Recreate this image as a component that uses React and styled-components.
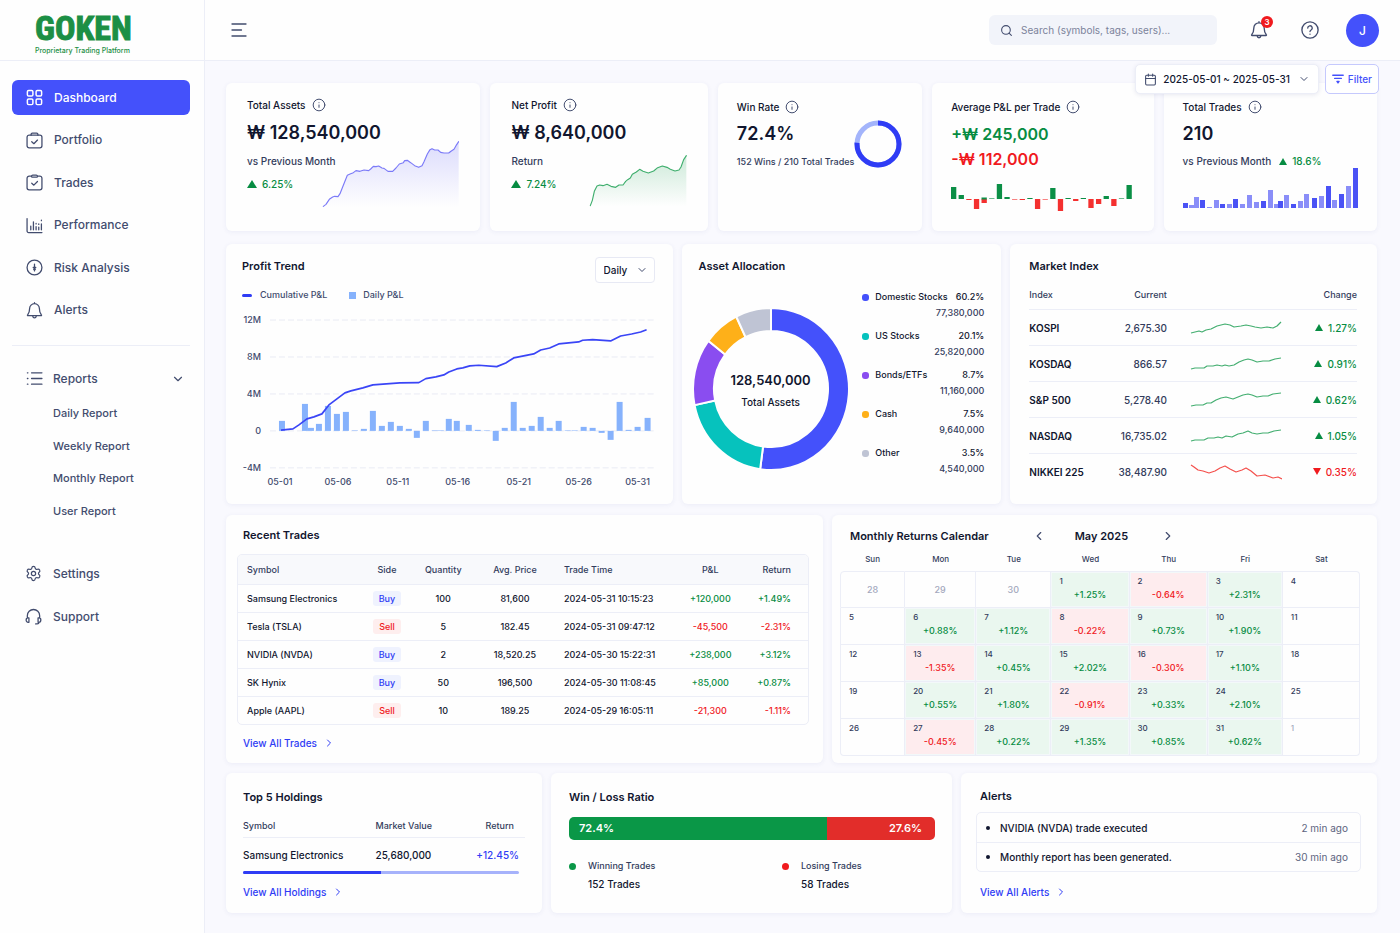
import React, { useState } from 'react';
import styled, { createGlobalStyle } from 'styled-components';
import {
  Calendar,
  ChevronDown,
  ChevronLeft,
  ChevronRight,
  Info,
  Search,
  Settings,
} from 'lucide-react';

const GlobalStyle = createGlobalStyle`
  :root {
    --clr-primary: #4451fb;
    --clr-primary-deep: #2f3cf5;
    --clr-text: #11162f;
    --clr-soft: #333c5c;
    --clr-nav: #424c6e;
    --clr-muted: #a3a8bd;
    --clr-green: #078c42;
    --clr-red: #f01a1e;
    --clr-line: #eceef7;
    --clr-page: #f9f9fe;
    --ff-primary: Inter, 'Liberation Sans', sans-serif;
  }
  * {
    box-sizing: border-box;
  }
  body {
    margin: 0;
    background: var(--clr-page);
    color: var(--clr-text);
    font-family: var(--ff-primary);
    font-size: 10px;
    line-height: 16px;
  }
  h1, h2, p, ul, dl, dd {
    margin: 0;
    padding: 0;
  }
  ul {
    list-style: none;
  }
  button, input, select {
    font-family: inherit;
    font-size: inherit;
    color: inherit;
  }
  button {
    padding: 0;
    border: none;
    background: none;
    cursor: pointer;
  }
  a {
    color: inherit;
    text-decoration: none;
  }
  table {
    width: 100%;
    border-collapse: separate;
    border-spacing: 0;
    table-layout: fixed;
  }
  th, td {
    padding: 0;
    font-weight: 500;
    text-align: left;
  }
  svg {
    display: block;
    flex: none;
  }
`;

/* ---------- layout ---------- */

const Layout = styled.div`
  display: grid;
  grid-template-columns: 205px minmax(0, 1fr);
  min-height: 100vh;
`;

const Sidebar = styled.aside`
  background: #fefefe;
  border-right: 1px solid var(--clr-line);
`;

const Brand = styled.a`
  display: flex;
  flex-direction: column;
  align-items: flex-start;
  height: 61px;
  padding: 12px 0 0 35px;
  border-bottom: 1px solid var(--clr-line);
  color: #1c8f45;
  strong {
    font-family: 'Roboto Condensed', Roboto, sans-serif;
    font-size: 34px;
    line-height: 32px;
    font-weight: 700;
    -webkit-text-stroke: 1px currentColor;
  }
  span {
    margin-top: 2px;
    font-size: 7px;
    line-height: 9px;
    font-weight: 500;
  }
`;

const NavList = styled.ul`
  display: flex;
  flex-direction: column;
  justify-content: space-between;
  height: ${(p) => p.$height}px;
  margin: ${(p) => p.$margin};
`;

const NavLink = styled.a`
  display: flex;
  align-items: center;
  gap: 11px;
  height: 35px;
  padding: 0 14px;
  border-radius: 6px;
  font-size: 12px;
  font-weight: 500;
  color: ${(p) => (p.$active ? '#fff' : 'var(--clr-nav)')};
  background: ${(p) => (p.$active ? 'var(--clr-primary)' : 'transparent')};
`;

const NavToggle = styled.button`
  display: flex;
  align-items: center;
  gap: 10px;
  width: calc(100% - 26px);
  height: 35px;
  margin: 15px 12px 0;
  padding: 0 5px 0 14px;
  font-size: 12px;
  font-weight: 500;
  color: var(--clr-nav);
  svg:last-child {
    margin-left: auto;
  }
`;

const SubLink = styled.a`
  display: block;
  padding-left: 53px;
  font-size: 11px;
  font-weight: 500;
  color: var(--clr-nav);
`;

const NavDivider = styled.hr`
  height: 1px;
  margin: 17px 14px 0 12px;
  border: none;
  background: var(--clr-line);
`;

const Header = styled.header`
  display: flex;
  align-items: center;
  height: 61px;
  padding: 0 21px 0 26px;
  background: #fefefe;
  border-bottom: 1px solid var(--clr-line);
  color: var(--clr-nav);
`;

const SearchBox = styled.label`
  display: flex;
  align-items: center;
  gap: 8px;
  width: 228px;
  height: 30px;
  margin: 0 32px 0 auto;
  padding: 0 11px;
  border-radius: 6px;
  background: #f2f4fa;
  input {
    flex: 1;
    min-width: 0;
    padding: 0;
    border: none;
    outline: none;
    background: none;
    &::placeholder {
      color: #7c839b;
      opacity: 1;
    }
  }
`;

const IconButton = styled.button`
  position: relative;
  display: grid;
  place-items: center;
  width: 20px;
  height: 20px;
  margin-right: 31px;
  color: var(--clr-nav);
  & + & {
    margin-right: 26px;
  }
`;

const Badge = styled.span`
  position: absolute;
  top: -4px;
  right: -4px;
  width: 12px;
  height: 12px;
  border-radius: 50%;
  background: var(--clr-red);
  color: #fff;
  font-size: 8px;
  line-height: 12px;
  font-weight: 600;
  text-align: center;
`;

const Avatar = styled.button`
  width: 33px;
  height: 33px;
  border-radius: 50%;
  background: var(--clr-primary);
  color: #fff;
  font-size: 12px;
  font-weight: 500;
`;

const Content = styled.main`
  position: relative;
  padding: 22px 23px 20px 21px;
`;

const Toolbar = styled.div`
  position: absolute;
  top: 3px;
  right: 21px;
  display: flex;
  gap: 6px;
`;

const ToolButton = styled.button`
  display: flex;
  align-items: center;
  gap: ${(p) => (p.$accent ? 4 : 6)}px;
  height: 30px;
  padding: 0 ${(p) => (p.$accent ? 6 : 8)}px;
  border: 1px solid ${(p) => (p.$accent ? '#c5c9fd' : 'var(--clr-line)')};
  border-radius: 5px;
  background: #fff;
  color: ${(p) => (p.$accent ? 'var(--clr-primary)' : 'var(--clr-text)')};
  font-weight: 500;
  box-shadow: ${(p) => (p.$accent ? 'none' : '0 1px 4px rgba(40, 50, 120, 0.1)')};
  svg {
    color: ${(p) => (p.$accent ? 'inherit' : 'var(--clr-nav)')};
  }
  svg + svg {
    margin-left: 2px;
  }
`;

const Row = styled.section`
  display: grid;
  grid-template-columns: ${(p) => p.$cols};
  gap: ${(p) => p.$gap || 9}px;
  margin-bottom: ${(p) => p.$after || 0}px;
`;

const Card = styled.article`
  min-width: 0;
  min-height: ${(p) => p.$minHeight}px;
  padding: ${(p) => p.$pad};
  border-radius: 6px;
  background: #fefefe;
  box-shadow: 0 1px 5px rgba(60, 70, 150, 0.07);
`;

const CardTitle = styled.h2`
  font-size: 11px;
  line-height: 16px;
  font-weight: 600;
  margin: ${(p) => p.$margin || '0'};
`;

const MoreLink = styled.a`
  display: inline-flex;
  align-items: center;
  gap: 6px;
  margin: ${(p) => p.$margin};
  color: var(--clr-primary-deep);
  font-weight: 500;
`;

/* ---------- kpi ---------- */

const KpiCard = styled(Card)`
  display: grid;
  /* text and drawing share one cell, the drawing may run under the text */
  > * {
    grid-area: 1 / 1;
  }
`;

const KpiLabel = styled.h2`
  display: flex;
  align-items: center;
  gap: 6px;
  margin-bottom: ${(p) => (p.$low ? 8 : 9)}px;
  font-size: 10px;
  line-height: 16px;
  font-weight: 500;
  svg {
    color: var(--clr-nav);
  }
`;

const KpiValue = styled.p`
  font-size: ${(p) => p.$size || 18}px;
  line-height: 22px;
  font-weight: 600;
  margin-bottom: ${(p) => p.$after || 9}px;
  color: ${(p) => p.$color || 'inherit'};
`;

const KpiNote = styled.p`
  display: flex;
  gap: 8px;
  margin-bottom: 7px;
  font-size: ${(p) => p.$size || 10}px;
  font-weight: 500;
  color: var(--clr-soft);
`;

const Delta = styled.span`
  display: inline-flex;
  align-items: center;
  gap: 5px;
  font-weight: 500;
  color: ${(p) => (p.$down ? 'var(--clr-red)' : 'var(--clr-green)')};
  &::before {
    content: '';
    border: solid transparent;
    border-width: ${(p) => {
      const side = p.$big ? 5 : 4;
      const tall = p.$big ? 8 : 7;
      return p.$down ? `${tall}px ${side}px 0` : `0 ${side}px ${tall}px`;
    }};
    border-${(p) => (p.$down ? 'top' : 'bottom')}-color: currentColor;
  }
`;

const KpiChart = styled.svg`
  justify-self: ${(p) => p.$justify || 'end'};
  align-self: ${(p) => p.$align || 'end'};
`;

/* ---------- profit trend ---------- */

const CardHead = styled.div`
  display: flex;
  justify-content: space-between;
`;

const SelectBox = styled.div`
  position: relative;
  width: 60px;
  height: 26px;
  color: var(--clr-nav);
  select {
    width: 100%;
    height: 100%;
    padding: 0 8px;
    border: 1px solid #e7e9f4;
    border-radius: 4px;
    background: #fff;
    appearance: none;
    color: var(--clr-text);
    font-weight: 500;
  }
  svg {
    position: absolute;
    top: 7px;
    right: 7px;
    pointer-events: none;
  }
`;

const ChartLegend = styled.ul`
  display: flex;
  gap: 22px;
  margin: 4px 0 5px;
  color: var(--clr-nav);
  font-size: 9px;
  font-weight: 500;
  li {
    display: flex;
    align-items: center;
  }
`;

const LegendKey = styled.i`
  width: ${(p) => (p.$line ? 10 : 7)}px;
  height: ${(p) => (p.$line ? 3 : 7)}px;
  margin-right: ${(p) => (p.$line ? 8 : 7)}px;
  border-radius: ${(p) => (p.$line ? 2 : 0)}px;
  background: ${(p) => (p.$line ? 'var(--clr-primary-deep)' : '#86b2fc')};
`;

const TrendSvg = styled.svg`
  width: 100%;
  height: auto;
  text {
    font-size: 9px;
    font-weight: 500;
    fill: var(--clr-nav);
  }
`;

/* ---------- allocation ---------- */

const Allocation = styled.div`
  display: flex;
  justify-content: space-between;
  margin-top: 15px;
`;

const Donut = styled.div`
  display: grid;
  place-items: center;
  margin: 4px 0 0 -6px;
  > * {
    grid-area: 1 / 1;
  }
  p {
    padding-top: 4px;
    text-align: center;
    font-weight: 500;
  }
  strong {
    display: block;
    margin-bottom: 6px;
    font-size: 13px;
    font-weight: 600;
  }
`;

const AllocationList = styled.dl`
  width: 122px;
  font-size: 9px;
  font-weight: 500;
  div {
    display: grid;
    grid-template-columns: 13px auto 1fr;
    align-items: center;
    height: 39px;
    align-content: start;
  }
  dt {
    display: contents;
  }
  dd {
    text-align: right;
  }
  dd:last-child {
    grid-column: 1 / -1;
    color: var(--clr-soft);
  }
`;

const Dot = styled.i`
  width: ${(p) => p.$size || 7}px;
  height: ${(p) => p.$size || 7}px;
  border-radius: ${(p) => (p.$round ? '50%' : '3px')};
  background: ${(p) => p.$color};
`;

/* ---------- tables ---------- */

const MarketTable = styled.table`
  margin-top: 11px;
  thead th {
    height: 24px;
    padding-bottom: 4px;
    color: var(--clr-soft);
    font-size: 9px;
  }
  td, tbody th {
    height: 36px;
    border-top: 1px solid var(--clr-line);
    color: var(--clr-soft);
  }
  tbody th {
    color: var(--clr-text);
    font-weight: 600;
  }
  th:nth-child(2), td:nth-child(2),
  th:last-child, td:last-child {
    text-align: right;
  }
  svg {
    margin-left: 23px;
  }
`;

const TradesTable = styled.table`
  border: 1px solid var(--clr-line);
  border-radius: 5px;
  overflow: hidden;
  font-size: 9px;
  thead th {
    height: 29px;
    background: #f8f9fc;
    color: var(--clr-soft);
  }
  td, tbody th {
    height: 28px;
    border-top: 1px solid var(--clr-line);
  }
  th, td {
    text-align: center;
  }
  th:first-child {
    padding-left: 9px;
    text-align: left;
  }
  th:nth-child(5), td:nth-child(5) {
    padding-left: 12px;
    text-align: left;
  }
  th:last-child, td:last-child {
    padding-right: 17px;
    text-align: right;
  }
`;

const Side = styled.span`
  display: inline-block;
  width: 28px;
  height: 15px;
  line-height: 15px;
  border-radius: 3px;
  color: ${(p) => (p.$sell ? 'var(--clr-red)' : 'var(--clr-primary-deep)')};
  background: ${(p) => (p.$sell ? '#feeeee' : '#eff2fe')};
`;

const Signed = styled.span`
  color: ${(p) => (p.children[0] === '-' ? 'var(--clr-red)' : 'var(--clr-green)')};
`;

/* ---------- calendar ---------- */

const CalendarHead = styled.div`
  display: flex;
  align-items: center;
  padding-left: 10px;
  button {
    color: var(--clr-nav);
  }
  h2:last-of-type {
    margin: 0 33px 0 29px;
  }
  button:first-of-type {
    margin-left: 43px;
  }
`;

const CalendarTable = styled.table`
  margin-top: 5px;
  thead th {
    height: 22px;
    padding-bottom: 2px;
    font-size: 8px;
    text-align: center;
    color: var(--clr-soft);
  }
  tbody tr:first-child td {
    border-top: 1px solid var(--clr-line);
  }
  tbody td:first-child {
    border-left: 1px solid var(--clr-line);
  }
  tbody tr:first-child td:first-child {
    border-top-left-radius: 4px;
  }
  tbody tr:first-child td:last-child {
    border-top-right-radius: 4px;
  }
  tbody tr:last-child td:first-child {
    border-bottom-left-radius: 4px;
  }
  tbody tr:last-child td:last-child {
    border-bottom-right-radius: 4px;
  }
`;

const dayFill = { up: '#eaf7ef', down: '#feecee', none: 'transparent' };

const Day = styled.td`
  height: 37px;
  padding: ${(p) => (p.$centered ? '0' : '3px 8px 0')};
  border-right: 1px solid var(--clr-line);
  border-bottom: 1px solid var(--clr-line);
  background: ${(p) => dayFill[p.$tone]};
  box-shadow: inset 0 0 0 1px ${(p) => (p.$tone === 'none' ? 'transparent' : '#f3f8f9')};
  vertical-align: ${(p) => (p.$centered ? 'middle' : 'top')};
  text-align: ${(p) => (p.$centered ? 'center' : 'left')};
  color: ${(p) => (p.$muted ? 'var(--clr-muted)' : 'var(--clr-soft)')};
  font-size: ${(p) => (p.$centered ? 9 : 8)}px;
  line-height: 12px;
  span {
    display: block;
    margin-top: 2px;
    font-size: 9px;
    text-align: center;
  }
`;

/* ---------- bottom row ---------- */

const HoldingsTable = styled.table`
  thead th {
    height: 24px;
    border-bottom: 1px solid var(--clr-line);
    font-size: 9px;
    color: var(--clr-soft);
  }
  td, tbody th {
    height: 33px;
  }
  thead th:first-child {
    width: 47%;
  }
  thead th:last-child {
    padding-right: 11px;
    text-align: right;
  }
  td:last-child {
    padding-right: 6px;
    text-align: right;
    color: var(--clr-primary-deep);
  }
`;

const Track = styled.div`
  height: 3px;
  margin-right: 6px;
  border-radius: 2px;
  background: #a6b2fb;
  overflow: hidden;
  div {
    height: 100%;
    background: var(--clr-primary-deep);
  }
`;

const RatioBar = styled.div`
  display: flex;
  height: 23px;
  margin-top: 12px;
  border-radius: 5px;
  overflow: hidden;
  color: #fff;
  font-size: 11px;
  line-height: 22px;
  font-weight: 600;
  div {
    flex: 1;
    padding: 0 13px 0 10px;
    background: #e22d2a;
    text-align: right;
  }
  div:first-child {
    flex: none;
    background: #0a9747;
    text-align: left;
  }
`;

const RatioLegend = styled.ul`
  display: grid;
  grid-template-columns: 213px 1fr;
  margin-top: 18px;
  li {
    display: grid;
    grid-template-columns: 19px 1fr;
    align-items: center;
    row-gap: 2px;
    font-weight: 500;
  }
  span {
    font-size: 9px;
    color: var(--clr-soft);
  }
  b {
    grid-column: 2;
    font-weight: 500;
  }
`;

const AlertList = styled.ul`
  border: 1px solid var(--clr-line);
  border-radius: 5px;
  font-weight: 500;
  li {
    display: flex;
    align-items: center;
    height: 29px;
    padding: 0 12px 0 9px;
  }
  li + li {
    border-top: 1px solid var(--clr-line);
  }
  i {
    margin-right: 10px;
  }
  time {
    margin-left: auto;
    color: #5d6580;
    font-weight: 400;
  }
`;

/* ---------- data ---------- */

const assetsLine =
  '310,408 318,402 328,387 338,380 344,378 354,379 360,370 370,345 382,315 392,310 400,307 408,301 420,303 432,299 446,301 452,296 460,288 468,289 476,287 486,293 492,294 504,303 518,303 528,293 538,281 550,277 554,271 562,270 572,277 584,286 596,291 606,286 612,274 622,251 630,238 636,235 644,239 654,239 662,246 672,248 686,248 694,242 702,237 708,226 716,214';

const profitLine =
  '1110,408 1116,392 1122,365 1130,349 1138,346 1148,348 1160,344 1172,350 1186,353 1196,346 1208,346 1216,335 1222,330 1230,325 1236,314 1248,307 1258,299 1268,305 1284,310 1300,304 1312,294 1326,289 1340,293 1350,299 1364,304 1376,301 1382,292 1390,270 1398,258';

const avgBars = [
  12, 4, -1, -10, -4, 0.6, 15, 2, -0.6, -1, 1, -10, -0.6, 11, -12, 1, -2, 1, -9,
  -5, 3, -7, 0.6, 14,
];

// x centre, height, strong fill
const tradeBars = [
  [2, 5, 1], [8, 3], [13, 11], [19, 8, 1], [26, 1], [33, 8], [39, 4, 1], [46, 4],
  [52, 9, 1], [59, 4], [66, 13], [73, 6], [80, 7, 1], [87, 18], [93, 4], [97, 7, 1],
  [103, 13], [110, 4, 1], [117, 7], [123, 14], [131, 10, 1], [138, 12], [145, 22, 1],
  [151, 8], [158, 14, 1], [165, 22], [172, 40, 1],
];

const trendBars = [
  [40, 10], [63, 27], [69, 3], [77, 7], [86, 25], [95, 17], [104, 19], [113, 0.5],
  [122, 2], [131, 20], [140, 5], [149, 9], [158, 5], [167, 2], [175, -7], [184, 10],
  [193, 0.5], [199, 0.5], [207, 12], [215, 10], [227, 6], [236, 1], [245, 0.5],
  [254, -10], [263, 3], [272, 29], [281, 3], [290, 5], [299, 14], [308, 3], [317, 10],
  [326, 0.5], [333, 0.5], [342, 4], [351, 3], [360, -2], [369, -9], [378, 29],
  [387, 1], [396, 4], [406, 13],
];

const trendLine =
  '39,122.3 51,121 57,117 65,111 72,109 80,106 87,97 95,91 103,85 109,83 121,80 131,77 158,75 177,74.7 184,70.7 194,69 202,67 207,64 215,61 221,60 228,58 237,57.3 255,58.7 264,55 272,50 292,46 299,42 308,40 317,36 337,34 341,32.3 351,31.7 369,33 379,28 390,26 399,24 405,21.7';

const trendTicks = [
  ['12M', 12],
  ['8M', 49],
  ['4M', 86],
  ['0', 123],
  ['-4M', 160],
];

const trendDates = [
  ['05-01', 38],
  ['05-06', 96],
  ['05-11', 156],
  ['05-16', 216],
  ['05-21', 277],
  ['05-26', 337],
  ['05-31', 396],
];

// from / to are degrees clockwise from the top
const allocation = [
  { name: 'Domestic Stocks', share: '60.2%', value: '77,380,000', color: '#4451fb', from: 0, to: 188 },
  { name: 'US Stocks', share: '20.1%', value: '25,820,000', color: '#06c2bd', from: 188, to: 258.5 },
  { name: 'Bonds/ETFs', share: '8.7%', value: '11,160,000', color: '#8a4df0', from: 258.5, to: 306.5 },
  { name: 'Cash', share: '7.5%', value: '9,640,000', color: '#feb019', from: 306.5, to: 333.5 },
  { name: 'Other', share: '3.5%', value: '4,540,000', color: '#bfc4d4', from: 333.5, to: 360 },
];

const markets = [
  { name: 'KOSPI', current: '2,675.30', change: '1.27%', line: '0,12 4,11 8,10 11,11 15,9 20,8 26,5 30,4 34,3 39,4 43,6 50,5 55,4 60,5 64,6 70,7 76,6 82,7 86,5 90,1' },
  { name: 'KOSDAQ', current: '866.57', change: '0.91%', line: '0,12 4,11 9,11 13,11 16,9 22,9 26,8 31,9 34,8 38,9 43,8 48,5 53,3 57,2 61,3 66,5 72,4 78,4 84,2 90,1' },
  { name: 'S&P 500', current: '5,278.40', change: '0.62%', line: '0,13 5,12 12,12 16,10 20,10 25,7 30,5 35,4 42,6 47,4 52,2 57,1 61,2 66,4 72,3 77,3 82,1 90,0' },
  { name: 'NASDAQ', current: '16,735.02', change: '1.05%', line: '0,12 4,11 13,11 17,9 23,9 27,8 31,9 35,7 41,8 47,5 52,4 57,2 61,4 66,5 72,4 77,4 83,2 90,1' },
  { name: 'NIKKEI 225', current: '38,487.90', change: '0.35%', down: true, line: '0,0 3,2 7,5 12,6 18,8 24,6 29,3 34,1 39,4 45,7 51,5 55,3 60,6 66,11 74,10 82,13 87,12 91,14' },
];

const trades = [
  ['Samsung Electronics', 'Buy', '100', '81,600', '2024-05-31 10:15:23', '+120,000', '+1.49%'],
  ['Tesla (TSLA)', 'Sell', '5', '182.45', '2024-05-31 09:47:12', '-45,500', '-2.31%'],
  ['NVIDIA (NVDA)', 'Buy', '2', '18,520.25', '2024-05-30 15:22:31', '+238,000', '+3.12%'],
  ['SK Hynix', 'Buy', '50', '196,500', '2024-05-30 11:08:45', '+85,000', '+0.87%'],
  ['Apple (AAPL)', 'Sell', '10', '189.25', '2024-05-29 16:05:11', '-21,300', '-1.11%'],
];

const weekDays = ['Sun', 'Mon', 'Tue', 'Wed', 'Thu', 'Fri', 'Sat'];

const weeks = [
  [[28, 'prev'], [29, 'prev'], [30, 'prev'], [1, '+1.25%'], [2, '-0.64%'], [3, '+2.31%'], [4]],
  [[5], [6, '+0.88%'], [7, '+1.12%'], [8, '-0.22%'], [9, '+0.73%'], [10, '+1.90%'], [11]],
  [[12], [13, '-1.35%'], [14, '+0.45%'], [15, '+2.02%'], [16, '-0.30%'], [17, '+1.10%'], [18]],
  [[19], [20, '+0.55%'], [21, '+1.80%'], [22, '-0.91%'], [23, '+0.33%'], [24, '+2.10%'], [25]],
  [[26], [27, '-0.45%'], [28, '+0.22%'], [29, '+1.35%'], [30, '+0.85%'], [31, '+0.62%'], [1, 'next']],
];

/* ---------- icons ---------- */

const Glyph = ({ size = 17, width = 1.2, children }) => (
  <svg
    width={size}
    height={size}
    viewBox="0 0 16 16"
    fill="none"
    stroke="currentColor"
    strokeWidth={width}
    strokeLinecap="round"
    strokeLinejoin="round"
    aria-hidden="true"
  >
    {children}
  </svg>
);

const DashboardIcon = () => (
  <Glyph width={1.4}>
    <rect x="1.3" y="1.3" width="5.2" height="5.2" rx="1.2" />
    <rect x="9.5" y="1.3" width="5.2" height="5.2" rx="1.2" />
    <rect x="1.3" y="9.5" width="5.2" height="5.2" rx="1.2" />
    <rect x="9.5" y="9.5" width="5.2" height="5.2" rx="1.2" />
  </Glyph>
);

const BellIcon = ({ size }) => (
  <Glyph size={size}>
    <path d="M8 .6v.9M3.4 6.2a4.6 4.6 0 0 1 9.2 0c0 3 .4 4.3 1.9 6a.4.4 0 0 1-.3.7H1.800a.4.4 0 0 1-.3-.7c1.500-1.700 1.900-3 1.900-6ZM6.300 13.200c.2 1 .8 1.700 1.700 1.700s1.500-.7 1.700-1.700" />
  </Glyph>
);

const PortfolioIcon = () => (
  <Glyph>
    <rect x="1" y="3" width="14" height="12" rx="2" />
    <path d="M4.800 3v-.8A1.200 1.200 0 0 1 6 1h4a1.200 1.200 0 0 1 1.200 1.200V3M5.400 9.200l2 1.800 3.400-3.400" />
  </Glyph>
);

const TradesIcon = () => (
  <Glyph>
    <path d="M5 2H3a2 2 0 0 0-2 2v9a2 2 0 0 0 2 2h10a2 2 0 0 0 2-2V4a2 2 0 0 0-2-2h-2M5 2c.2-.7.7-1 1.400-1h3.200c.7 0 1.200.3 1.400 1L10.400 3H5.600ZM5.400 8.700l2 1.800 3.400-3.400" />
  </Glyph>
);

const PerformanceIcon = () => (
  <Glyph>
    <path d="M1 1.500v11.700a1.500 1.500 0 0 0 1.500 1.500H15M4.500 8.500v3.500M7 4.500V12M9.500 6v.5M9.500 9v3M12 6.500v.5M12 9.500V12M14.500 3v.5M14.500 6.500V12" />
  </Glyph>
);

const RiskIcon = () => (
  <Glyph>
    <circle cx="8" cy="8" r="7" />
    <path d="M8 4.800v6.400M6.800 8h2.400M7.200 9.600l.8 1 .8-1" />
  </Glyph>
);

const ListIcon = () => (
  <Glyph>
    <path d="M5.200 2.700H15M5.200 8H15M5.200 13.300H15M1.300 2.700h.5M1.300 8h.5M1.300 13.300h.5" />
  </Glyph>
);

const SupportIcon = () => (
  <Glyph>
    <path d="M2.200 9.500V7.200a5.800 5.800 0 0 1 11.600 0v2.300M2.500 9.300h1.200v4.200H3a1.900 1.900 0 0 1-1.900-2.100c0-1.200.6-2.100 1.400-2.100ZM13.500 9.300h-1.200v4.200H13c1 0 1.900-.8 1.900-2.100 0-1.200-.6-2.100-1.400-2.100ZM13.200 13.500c0 1-.8 1.500-1.800 1.500H10" />
  </Glyph>
);

const MenuIcon = () => (
  <Glyph size={16} width={1.3}>
    <path d="M1 2h14M1 8h9.500M1 14h14" />
  </Glyph>
);

const HelpIcon = () => (
  <Glyph size={18}>
    <circle cx="8" cy="8" r="7.200" />
    <path d="M6 6.300a2 2 0 1 1 3 1.700c-.7.4-1 .7-1 1.400M8 11.600v.1" />
  </Glyph>
);

const FilterIcon = () => (
  <Glyph size={12} width={1.7}>
    <path d="M1 3h14M3.500 7.300h9M6.500 11.300h3L8 13.300Z" />
  </Glyph>
);

/* ---------- parts ---------- */

const Kpi = ({ label, low, chart, children }) => (
  <KpiCard $minHeight={148} $pad={low ? '16px 19px 18px' : '14px 21px 24px'}>
    {chart}
    <div>
      <KpiLabel $low={low}>
        {label}
        <Info size={14} strokeWidth={1.7} />
      </KpiLabel>
      {children}
    </div>
  </KpiCard>
);

const AreaChart = ({ id, line, box, width, height, color, base }) => {
  const pts = line.split(' ');
  const first = pts[0].split(',')[0];
  const last = pts[pts.length - 1].split(',')[0];
  return (
    <KpiChart width={width} height={height} viewBox={box} aria-hidden="true">
      <defs>
        <linearGradient id={id} x1="0" y1="0" x2="0" y2="1">
          <stop offset="0" stopColor={color} stopOpacity="0.26" />
          <stop offset="1" stopColor={color} stopOpacity="0" />
        </linearGradient>
      </defs>
      <polygon points={`${first},${base} ${line} ${last},${base}`} fill={`url(#${id})`} />
      <polyline
        points={line}
        fill="none"
        stroke={color}
        strokeWidth="3.4"
        strokeLinejoin="round"
        strokeLinecap="round"
      />
    </KpiChart>
  );
};

const segmentPath = ({ from, to }) => {
  const at = (deg, rx, ry) => {
    const a = (deg * Math.PI) / 180;
    return `${78 + rx * Math.sin(a)} ${81 - ry * Math.cos(a)}`;
  };
  const large = to - from > 180 ? 1 : 0;
  return `M${at(from, 78, 81)}A78 81 0 ${large} 1 ${at(to, 78, 81)}L${at(to, 57, 58)}A57 58 0 ${large} 0 ${at(from, 57, 58)}Z`;
};

const DayCell = ({ day, value }) => {
  const outside = value === 'prev' || value === 'next';
  const hasValue = value && !outside;
  const tone = !hasValue ? 'none' : value[0] === '-' ? 'down' : 'up';
  return (
    <Day $tone={tone} $muted={outside} $centered={value === 'prev'}>
      {day}
      {hasValue && <Signed>{value}</Signed>}
    </Day>
  );
};

const navItems = [
  ['Dashboard', <DashboardIcon />],
  ['Portfolio', <PortfolioIcon />],
  ['Trades', <TradesIcon />],
  ['Performance', <PerformanceIcon />],
  ['Risk Analysis', <RiskIcon />],
  ['Alerts', <BellIcon />],
];

const SideNav = () => {
  const [open, setOpen] = useState(true);
  return (
    <Sidebar>
      <Brand href="#">
        <strong>GOKEN</strong>
        <span>Proprietary Trading Platform</span>
      </Brand>
      <nav>
        <NavList $height={248} $margin="19px 14px 0 12px">
          {navItems.map(([name, icon], i) => (
            <li key={name}>
              <NavLink href="#" $active={i === 0}>
                {icon}
                {name}
              </NavLink>
            </li>
          ))}
        </NavList>
        <NavDivider />
        <NavToggle type="button" aria-expanded={open} onClick={() => setOpen(!open)}>
          <ListIcon />
          Reports
          <ChevronDown size={14} />
        </NavToggle>
        {open && (
          <NavList $height={114} $margin="9px 0 0">
            {['Daily', 'Weekly', 'Monthly', 'User'].map((name) => (
              <li key={name}>
                <SubLink href="#">{name} Report</SubLink>
              </li>
            ))}
          </NavList>
        )}
        <NavList $height={78} $margin="37px 14px 0 11px">
          <li>
            <NavLink href="#">
              <Settings size={17} strokeWidth={1.7} />
              Settings
            </NavLink>
          </li>
          <li>
            <NavLink href="#">
              <SupportIcon />
              Support
            </NavLink>
          </li>
        </NavList>
      </nav>
    </Sidebar>
  );
};

const TopBar = () => (
  <Header>
    <button type="button" aria-label="Toggle menu">
      <MenuIcon />
    </button>
    <SearchBox>
      <Search size={13} />
      <input type="search" aria-label="Search" placeholder="Search (symbols, tags, users)..." />
    </SearchBox>
    <IconButton type="button" aria-label="Notifications">
      <BellIcon size={18} />
      <Badge>3</Badge>
    </IconButton>
    <IconButton type="button" aria-label="Help">
      <HelpIcon />
    </IconButton>
    <Avatar type="button">J</Avatar>
  </Header>
);

const KpiRow = () => (
  <Row $cols="254fr 217fr 204fr 221fr 213fr" $gap={10} $after={13}>
    <Kpi
      label="Total Assets"
      chart={
        <AreaChart id="assets" line={assetsLine} box="306 212 411 198" base={410} width={137} height={66} color="#7b7af8" />
      }
    >
      <KpiValue>₩ 128,540,000</KpiValue>
      <KpiNote>vs Previous Month</KpiNote>
      <Delta $big>6.25%</Delta>
    </Kpi>
    <Kpi
      label="Net Profit"
      chart={
        <AreaChart id="profit" line={profitLine} box="1106 256 294 156" base={410} width={98} height={52} color="#3fae6d" />
      }
    >
      <KpiValue>₩ 8,640,000</KpiValue>
      <KpiNote>Return</KpiNote>
      <Delta $big>7.24%</Delta>
    </Kpi>
    <Kpi
      label="Win Rate"
      low
      chart={
        <KpiChart $align="start" width="50" height="90" viewBox="0 0 50 90" fill="none" strokeWidth="5" aria-hidden="true">
          <circle cx="25" cy="45" r="21" stroke="#a3b4fb" />
          <circle cx="25" cy="45" r="21" stroke="#2f3cf5" pathLength="100" strokeDasharray="76 24" transform="rotate(-90 25 45)" />
        </KpiChart>
      }
    >
      <KpiValue>72.4%</KpiValue>
      <KpiNote $size={9}>152 Wins / 210 Total Trades</KpiNote>
    </Kpi>
    <Kpi
      label="Average P&L per Trade"
      low
      chart={
        <KpiChart $justify="start" width="181" height="30" viewBox="0 0 181 30" aria-hidden="true">
          {avgBars.map((h, i) => (
            <rect
              key={i}
              x={i * 7.63}
              y={h > 0 ? 16 - h : 16}
              width="5.3"
              height={Math.abs(h)}
              fill={h > 0 ? '#0b8f46' : '#f4302f'}
            />
          ))}
          <rect x="30.5" y="14.5" width="5.3" height="2" fill="#0b8f46" />
        </KpiChart>
      }
    >
      <KpiValue $size={16} $after={3} $color="var(--clr-green)">
        +₩ 245,000
      </KpiValue>
      <KpiValue $size={16} $after={3} $color="var(--clr-red)">
        -₩ 112,000
      </KpiValue>
    </Kpi>
    <Kpi
      label="Total Trades"
      low
      chart={
        <KpiChart width="175" height="45" viewBox="0 0 175 45" aria-hidden="true">
          {tradeBars.map(([x, h, strong]) => (
            <rect key={x} x={x - 2} y={40 - h} width="5" height={h} fill={strong ? '#4a52f5' : '#8a8ef8'} />
          ))}
        </KpiChart>
      }
    >
      <KpiValue $after={8}>210</KpiValue>
      <KpiNote>
        vs Previous Month <Delta>18.6%</Delta>
      </KpiNote>
    </Kpi>
  </Row>
);

const ProfitTrend = () => (
  <Card $minHeight={260} $pad="13px 18px 8px 16px">
    <CardHead>
      <CardTitle $margin="1px 0 0">Profit Trend</CardTitle>
      <SelectBox>
        <select aria-label="Interval" defaultValue="Daily">
          <option>Daily</option>
          <option>Weekly</option>
          <option>Monthly</option>
        </select>
        <ChevronDown size={12} />
      </SelectBox>
    </CardHead>
    <ChartLegend>
      <li>
        <LegendKey $line />
        Cumulative P&amp;L
      </li>
      <li>
        <LegendKey />
        Daily P&amp;L
      </li>
    </ChartLegend>
    <TrendSvg viewBox="0 0 413 182" role="img" aria-label="Cumulative and daily P&L">
      {trendTicks.map(([label, y]) => (
        <g key={label}>
          <text x="19" y={y + 3} textAnchor="end">
            {label}
          </text>
          <line x1="28" x2="412" y1={y} y2={y} stroke="#e9ebf4" strokeDasharray="6 3" />
        </g>
      ))}
      {trendBars.map(([x, h]) => (
        <rect key={x} x={x - 3} y={h > 0 ? 123 - h : 123} width="6" height={Math.abs(h)} fill="#86b2fc" />
      ))}
      <polyline points={trendLine} fill="none" stroke="#3a45f6" strokeWidth="1.7" strokeLinejoin="round" />
      {trendDates.map(([label, x]) => (
        <text key={label} x={x} y="177" textAnchor="middle">
          {label}
        </text>
      ))}
    </TrendSvg>
  </Card>
);

const AssetAllocation = () => (
  <Card $minHeight={260} $pad="14px 17px">
    <CardTitle>Asset Allocation</CardTitle>
    <Allocation>
      <Donut>
        <svg width="156" height="162" viewBox="0 0 156 162" aria-hidden="true">
          {allocation.map((seg) => (
            <path key={seg.name} d={segmentPath(seg)} fill={seg.color} stroke="#fefefe" strokeWidth="2" />
          ))}
        </svg>
        <p>
          <strong>128,540,000</strong>
          Total Assets
        </p>
      </Donut>
      <AllocationList>
        {allocation.map((seg) => (
          <div key={seg.name}>
            <dt>
              <Dot $color={seg.color} />
              {seg.name}
            </dt>
            <dd>{seg.share}</dd>
            <dd>{seg.value}</dd>
          </div>
        ))}
      </AllocationList>
    </Allocation>
  </Card>
);

const MarketIndex = () => (
  <Card $minHeight={260} $pad="14px 20px 14px 19px">
    <CardTitle>Market Index</CardTitle>
    <MarketTable>
      <colgroup>
        <col style={{ width: '22%' }} />
        <col style={{ width: '20%' }} />
        <col />
        <col style={{ width: '20%' }} />
      </colgroup>
      <thead>
        <tr>
          <th>Index</th>
          <th>Current</th>
          <th aria-label="Trend" />
          <th>Change</th>
        </tr>
      </thead>
      <tbody>
        {markets.map((m) => (
          <tr key={m.name}>
            <th scope="row">{m.name}</th>
            <td>{m.current}</td>
            <td>
              <svg width="92" height="16" viewBox="-1 -1 92 16" fill="none" aria-hidden="true">
                <polyline points={m.line} stroke={m.down ? '#f4504c' : '#43ae70'} strokeWidth="1.2" strokeLinejoin="round" />
              </svg>
            </td>
            <td>
              <Delta $down={m.down}>{m.change}</Delta>
            </td>
          </tr>
        ))}
      </tbody>
    </MarketTable>
  </Card>
);

const RecentTrades = () => (
  <Card $minHeight={248} $pad="12px 14px 11px 11px">
    <CardTitle $margin="0 0 11px 6px">Recent Trades</CardTitle>
    <TradesTable>
      <colgroup>
        {[128, 43, 70, 74, 120, 78, 59].map((w, i) => (
          <col key={i} style={{ width: `${(w / 572) * 100}%` }} />
        ))}
      </colgroup>
      <thead>
        <tr>
          {['Symbol', 'Side', 'Quantity', 'Avg. Price', 'Trade Time', 'P&L', 'Return'].map((h) => (
            <th key={h}>{h}</th>
          ))}
        </tr>
      </thead>
      <tbody>
        {trades.map(([symbol, side, qty, price, time, pl, ret]) => (
          <tr key={symbol}>
            <th scope="row">{symbol}</th>
            <td>
              <Side $sell={side === 'Sell'}>{side}</Side>
            </td>
            <td>{qty}</td>
            <td>{price}</td>
            <td>{time}</td>
            <td>
              <Signed>{pl}</Signed>
            </td>
            <td>
              <Signed>{ret}</Signed>
            </td>
          </tr>
        ))}
      </tbody>
    </TradesTable>
    <MoreLink href="#" $margin="10px 0 0 6px">
      View All Trades <ChevronRight size={12} />
    </MoreLink>
  </Card>
);

const ReturnsCalendar = () => (
  <Card $minHeight={248} $pad="13px 17px 7px 8px">
    <CalendarHead>
      <CardTitle>Monthly Returns Calendar</CardTitle>
      <button type="button" aria-label="Previous month">
        <ChevronLeft size={14} />
      </button>
      <CardTitle>May 2025</CardTitle>
      <button type="button" aria-label="Next month">
        <ChevronRight size={14} />
      </button>
    </CalendarHead>
    <CalendarTable>
      <colgroup>
        {[65, 71, 75, 78, 78, 75, 77].map((w, i) => (
          <col key={i} style={{ width: `${(w / 519) * 100}%` }} />
        ))}
      </colgroup>
      <thead>
        <tr>
          {weekDays.map((d) => (
            <th key={d}>{d}</th>
          ))}
        </tr>
      </thead>
      <tbody>
        {weeks.map((week, i) => (
          <tr key={i}>
            {week.map(([day, value]) => (
              <DayCell key={day} day={day} value={value} />
            ))}
          </tr>
        ))}
      </tbody>
    </CalendarTable>
  </Card>
);

const Holdings = () => (
  <Card $minHeight={140} $pad="16px 17px 11px">
    <CardTitle $margin="0 0 9px">Top 5 Holdings</CardTitle>
    <HoldingsTable>
      <thead>
        <tr>
          <th>Symbol</th>
          <th>Market Value</th>
          <th>Return</th>
        </tr>
      </thead>
      <tbody>
        <tr>
          <th scope="row">Samsung Electronics</th>
          <td>25,680,000</td>
          <td>+12.45%</td>
        </tr>
      </tbody>
    </HoldingsTable>
    <Track>
      <div style={{ width: '50%' }} />
    </Track>
    <MoreLink href="#" $margin="10px 0 0">
      View All Holdings <ChevronRight size={12} />
    </MoreLink>
  </Card>
);

const WinLoss = () => (
  <Card $minHeight={140} $pad="16px 17px 16px 18px">
    <CardTitle>Win / Loss Ratio</CardTitle>
    <RatioBar>
      <div style={{ width: '70.5%' }}>72.4%</div>
      <div>27.6%</div>
    </RatioBar>
    <RatioLegend>
      <li>
        <Dot $round $color="#0a9747" />
        <span>Winning Trades</span>
        <b>152 Trades</b>
      </li>
      <li>
        <Dot $round $color="#f01a1e" />
        <span>Losing Trades</span>
        <b>58 Trades</b>
      </li>
    </RatioLegend>
  </Card>
);

const Alerts = () => (
  <Card $minHeight={140} $pad="15px 16px 11px 15px">
    <CardTitle $margin="0 0 8px 4px">Alerts</CardTitle>
    <AlertList>
      <li>
        <Dot $round $size={4} $color="#11162f" />
        NVIDIA (NVDA) trade executed
        <time>2 min ago</time>
      </li>
      <li>
        <Dot $round $size={4} $color="#11162f" />
        Monthly report has been generated.
        <time>30 min ago</time>
      </li>
    </AlertList>
    <MoreLink href="#" $margin="12px 0 0 4px">
      View All Alerts <ChevronRight size={12} />
    </MoreLink>
  </Card>
);

const App = () => {
  return (
    <>
      <GlobalStyle />
      <Layout>
        <SideNav />
        <div>
          <TopBar />
          <Content>
            <KpiRow />
            <Row $cols="447fr 320fr 367fr" $after={11}>
              <ProfitTrend />
              <AssetAllocation />
              <MarketIndex />
            </Row>
            <Row $cols="597fr 545fr" $after={10}>
              <RecentTrades />
              <ReturnsCalendar />
            </Row>
            <Row $cols="316fr 401fr 416fr">
              <Holdings />
              <WinLoss />
              <Alerts />
            </Row>
            <Toolbar>
              <ToolButton type="button">
                <Calendar size={13} />
                2025-05-01 ~ 2025-05-31
                <ChevronDown size={12} />
              </ToolButton>
              <ToolButton type="button" $accent>
                <FilterIcon />
                Filter
              </ToolButton>
            </Toolbar>
          </Content>
        </div>
      </Layout>
    </>
  );
};

export default App;
